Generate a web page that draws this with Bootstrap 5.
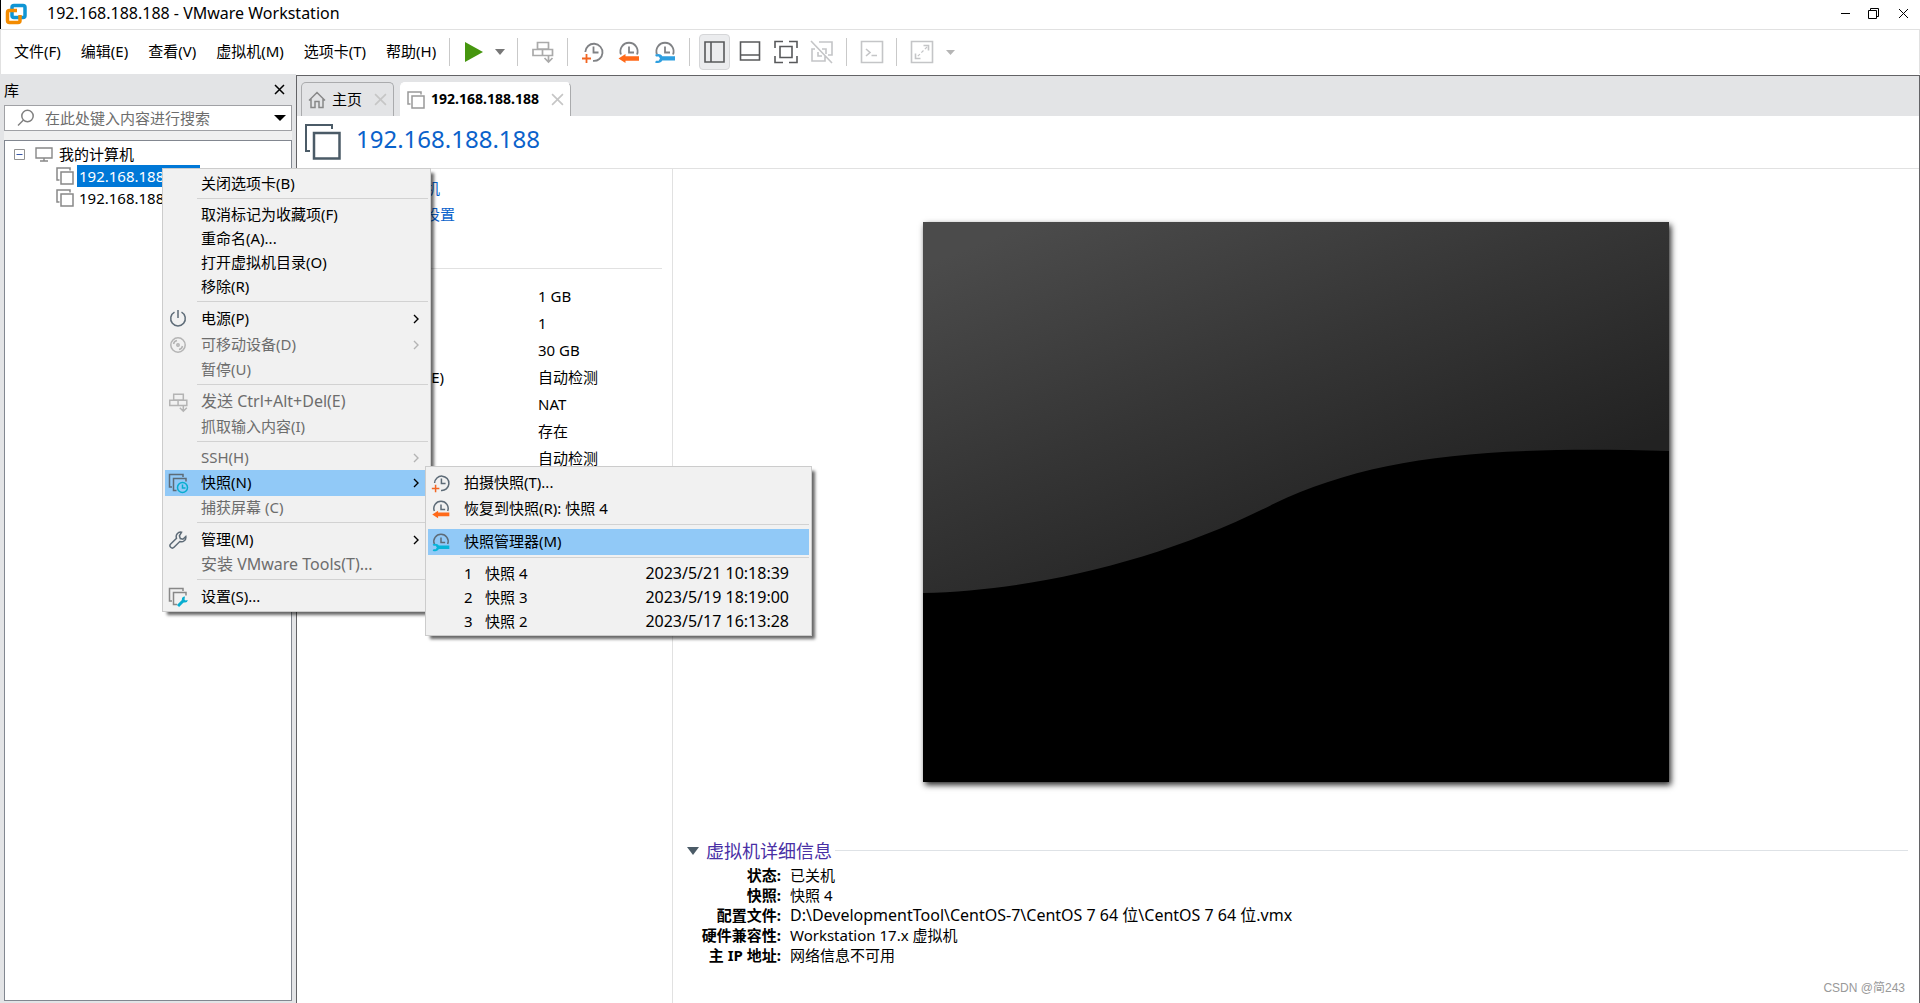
<!DOCTYPE html>
<html lang="zh-CN">
<head>
<meta charset="utf-8">
<meta name="viewport" content="width=device-width, initial-scale=1">
<title>192.168.188.188 - VMware Workstation</title>
<link rel="stylesheet" href="https://cdn.jsdelivr.net/npm/bootstrap@5.3.0/dist/css/bootstrap.min.css">
<style>
  :root { --chrome: #e3e4e6; --rule: #e1e1e1; --frame: #636366; --link: #0a62cb; --slate: #4b5b67; }
  body { font: 15px/20px "Noto Sans", "Noto Sans CJK SC", sans-serif; color: #000; background: #fff; }
  button { font: inherit; color: inherit; background: none; border: 0; padding: 0; text-align: left; white-space: nowrap; }
  svg { display: block; flex: none; }
  a { text-decoration: none; color: var(--link); }
  .app-window { min-height: 100vh; }
  .latin-lg { font-size: 16px; }

  .title-bar { height: 29px; border-left: 1px solid #000; padding: 0 11px 2px 4px; }
  .title-text { margin-left: 20px; font-weight: 400; }
  .win-restore { margin: 0 19px 0 17px; }
  .menu-bar { height: 45px; border: 1px solid var(--rule); border-bottom: 0; padding-left: 13px; }
  .menu-list { gap: 20px; margin-right: 13px; padding-bottom: 2px; }
  .divider { width: 1px; height: 28px; background: #c9c9c9; flex: none; }
  .tool-set { padding: 0 12px 0 13px; gap: 12px; }
  .power-set { padding-left: 15px; }
  .view-set { padding-left: 9px; color: #58595b; }
  .clock-set { color: #808285; }
  .tool-off { color: #c4c5c7; }
  .tool-keys { color: #aaa; }
  .tool-toggle { width: 31px; height: 36px; border: 1px solid #d5d6d8; border-radius: 4px; background: #ebecee; margin-right: -4px; }

  .library { width: 296px; background: var(--chrome); padding: 0 4px 2px; }
  .library-head { height: 31px; padding-right: 7px; }
  .search-box { height: 26px; border: 1px solid #a0a1a5; background: #fff; padding: 0 5px 0 12px; }
  .search-box input { min-width: 0; border: 0; padding: 0; margin-left: 10px; font: inherit; outline: 0; background: none; }
  .search-box input::placeholder { color: #6d6d6d; opacity: 1; }
  .pane-gap { height: 9px; background: #f0f0f0; }
  .tree-box { border: 1px solid #828790; background: #fff; padding: 2px 0; }
  .tree-row { height: 22px; gap: 3px; }
  .tree-root { padding-left: 9px; gap: 6px; }
  .tree-leaf { padding-left: 51px; padding-right: 10px; }
  .tree-name { height: 22px; line-height: 22px; padding: 0 2px; width: 123px; }
  .tree-name.chosen { background: #0078d7; color: #fff; }

  .workspace { border: 1px solid var(--frame); border-bottom: 0; min-width: 0; margin-top: 1px; }
  .tab-strip { height: 40px; background: var(--chrome); padding: 6px 0 0 4px; gap: 6px; }
  .vm-tab { height: 34px; border: 1px solid #aaabad; border-bottom: 0; border-radius: 5px 5px 0 0; padding: 0 6px; gap: 6px; }
  .vm-tab.current { background: #fff; border-left-color: #fff; border-top-color: #fff; font-size: 14px; font-weight: 700; }
  .tab-label { padding-bottom: 2px; }
  .tab-close { color: #c6c6c6; margin-left: 6px; }
  .vm-head { height: 53px; border-bottom: 1px solid var(--rule); padding-left: 8px; }
  .vm-name { font-size: 24px; line-height: 32px; font-weight: 400; color: var(--link); margin: 0 0 6px 15px; }

  .summary { width: 376px; border-right: 1px solid var(--rule); padding: 6px 10px 0 53px; flex: none; }
  .summary a { line-height: 26px; }
  .summary hr { margin: 41px 0 13px; border-color: var(--rule); opacity: 1; }
  .device-table { width: 100%; }
  .device-table th, .device-table td { height: 27px; padding: 0; font-weight: 400; }
  .device-table th { width: 188px; }

  .console { padding: 53px 11px 0; min-width: 0; }
  .guest-screen { width: 61%; aspect-ratio: 4 / 3; margin: 0 auto 55px; box-shadow: 2px 3px 6px rgba(0,0,0,.85); }
  .guest-screen svg { width: 100%; height: 100%; }
  .detail-head { height: 28px; padding-left: 3px; }
  .detail-title { font-size: 18px; line-height: 28px; font-weight: 400; color: #4930a5; margin: 0 3px 0 7px; }
  .detail-list { display: grid; grid-template-columns: 97px 1fr; column-gap: 9px; margin: 0; }
  .detail-list dt { text-align: right; white-space: nowrap; }
  .detail-list dd { margin: 0; }
  .watermark { right: 15px; bottom: 6px; font: 12px/18px "Liberation Sans", "Noto Sans CJK SC", sans-serif; color: #999; }

  .popup { background: #f1f1f1; border: 1px solid #ccc; padding: 3px 2px 1px; box-shadow: 4px 4px 3px -1px rgba(0,0,0,.6); }
  .context-menu { left: 162px; top: 168px; width: 269px; z-index: 5; }
  .snapshot-menu { left: 425px; top: 466px; width: 387px; z-index: 6; }
  .entry { height: 24px; padding: 0 8px 2px 0; width: 100%; }
  .entry.tall { height: 26px; }
  .entry:disabled { color: #6d6d6d; }
  .entry.hot { background: #91c9f7; }
  .entry svg { margin-top: 2px; }
  .entry-icon { width: 36px; padding-left: 3px; flex: none; color: #5d6b77; }
  .entry:disabled .entry-icon, .entry:disabled > svg { color: #b4b4b4; }
  .popup .entry-icon { --tint: #08b4d8; }
  .popup-rule { height: 1px; background: #d2d2d2; margin: 2px 0 4px 32px; }
  .snap-no { width: 21px; }
  .snap-time { margin-right: 12px; }
</style>
</head>
<body>
<svg width="0" height="0" class="position-absolute" aria-hidden="true">
  <defs>
    <symbol id="i-vm" viewBox="0 0 18 18"><path d="M3.500 13H1V1h13v2.500M5 5h12v12H5z" fill="none" stroke="currentColor" stroke-width="1.500"/></symbol>
    <symbol id="i-x" viewBox="0 0 12 12"><path d="M1 1l10 10M11 1L1 11" stroke="currentColor" fill="none" stroke-width="1.500"/></symbol>
    <symbol id="i-clock" viewBox="0 0 24 24"><path d="M4.300 12A8.600 8.600 0 1 1 12 20.900M12.500 6.500v6h5" fill="none" stroke="currentColor" stroke-width="1.800"/></symbol>
    <symbol id="i-halfclock" viewBox="0 0 24 24"><path d="M4 14.500A8.600 8.600 0 1 1 20 14.500M12 6.500v6h5" fill="none" stroke="currentColor" stroke-width="1.800"/></symbol>
    <symbol id="i-snap" viewBox="0 0 24 24"><use href="#i-clock"/><path d="M5.500 14v9M1 18.500h9" stroke="#f26522" stroke-width="1.800"/></symbol>
    <symbol id="i-revert" viewBox="0 0 24 24"><use href="#i-halfclock"/><path d="M1.500 18.500l7-4.500v2.300H22v4.400H8.500V23z" fill="#ff6a1a"/></symbol>
    <symbol id="i-manage" viewBox="0 0 24 24"><use href="#i-halfclock"/><path d="M2 14.800c3.200-1.500 6.300-.500 7.300 1.500H22v4.200H9.300c-1 2.300-4.100 3.200-7.300 1.900l1-1.600h2.700l1.300-2.300-1.300-2.100H3z" fill="var(--tint,#2e9fe0)"/></symbol>
    <symbol id="i-keys" viewBox="0 0 24 24"><path d="M6.500 2.500h11v6.500h-11zM2 9.500h9.500v6H2zM11.500 9.500h10v6h-10zM17.500 15.500v6.500M13.500 18l4 4 4-4" fill="none" stroke="currentColor" stroke-width="1.700"/></symbol>
    <symbol id="i-next" viewBox="0 0 8 12"><path d="M2 2l4 4-4 4" fill="none" stroke="currentColor" stroke-width="1.400"/></symbol>
  </defs>
</svg>

<div class="app-window d-flex flex-column position-relative">
  <header class="title-bar d-flex align-items-center">
    <svg width="22" height="22" viewBox="0 0 22 22" fill="none" stroke-width="3.500"><rect x="7" y="2.500" width="13" height="12" rx="2" stroke="#0f95d4"/><path d="M12 7.500H4.500a2 2 0 0 0-2 2v8a2 2 0 0 0 2 2H13a2 2 0 0 0 2-2V12" stroke="#f38b00"/></svg>
    <h1 class="title-text latin-lg mb-0 flex-grow-1">192.168.188.188 - VMware Workstation</h1>
    <button aria-label="最小化"><svg width="11" height="11"><path d="M1 5.500h9" stroke="#000"/></svg></button>
    <button class="win-restore" aria-label="还原"><svg width="11" height="11" fill="none" stroke="#000"><path d="M.5 2.500h8v8h-8zM2.500 2.500v-2h8v8h-2"/></svg></button>
    <button aria-label="关闭"><svg width="11" height="11"><path d="M1 1l9 9M10 1l-9 9" stroke="#000"/></svg></button>
  </header>

  <nav class="menu-bar d-flex align-items-center">
    <div class="menu-list d-flex">
      <button>文件(F)</button><button>编辑(E)</button><button>查看(V)</button><button>虚拟机(M)</button><button>选项卡(T)</button><button>帮助(H)</button>
    </div>
    <span class="divider"></span>
    <div class="tool-set power-set d-flex align-items-center">
      <button aria-label="开启"><svg width="18" height="20"><path d="M0 0l18 10L0 20z" fill="#46960f"/></svg></button>
      <button aria-label="电源选项"><svg width="10" height="6"><path d="M0 0h10L5 6z" fill="#777"/></svg></button>
    </div>
    <span class="divider"></span>
    <div class="tool-set tool-keys d-flex align-items-center">
      <button aria-label="发送 Ctrl+Alt+Del"><svg width="24" height="24"><use href="#i-keys"/></svg></button>
    </div>
    <span class="divider"></span>
    <div class="tool-set clock-set d-flex align-items-center">
      <button aria-label="拍摄快照"><svg width="24" height="24"><use href="#i-snap"/></svg></button>
      <button aria-label="恢复快照"><svg width="24" height="24"><use href="#i-revert"/></svg></button>
      <button aria-label="管理快照"><svg width="24" height="24"><use href="#i-manage"/></svg></button>
    </div>
    <span class="divider"></span>
    <div class="tool-set view-set d-flex align-items-center">
      <button class="tool-toggle d-flex align-items-center justify-content-center" aria-label="显示库"><svg width="21" height="22" fill="none" stroke="currentColor" stroke-width="1.600"><path d="M1 1h19v20H1zM7 1v20"/></svg></button>
      <button aria-label="缩略图栏"><svg width="24" height="24" fill="none" stroke="currentColor" stroke-width="1.600"><path d="M2.500 2h19v18h-19zM2.500 15h19"/></svg></button>
      <button aria-label="全屏"><svg width="24" height="24" fill="none" stroke="currentColor" stroke-width="1.600"><path d="M6 6.500h12v11H6zM1 8V1.500H9M15 1.500h8V8M23 16v6.500h-8M9 22.500H1V16"/></svg></button>
      <button class="tool-off" aria-label="Unity"><svg width="24" height="24" fill="none" stroke="currentColor" stroke-width="1.600"><path d="M9 2h13v13h-4M5 9H2v12h13v-5M12 9h4v5M8 12v4h4M1 1l21 22"/></svg></button>
    </div>
    <span class="divider"></span>
    <div class="tool-set tool-off d-flex align-items-center">
      <button aria-label="控制台"><svg width="24" height="24" fill="none" stroke="currentColor" stroke-width="1.600"><path d="M1.500 1.500h21v21h-21zM6 9l4 3.500L6 16M11.500 15.500H17"/></svg></button>
    </div>
    <span class="divider"></span>
    <div class="tool-set tool-off d-flex align-items-center">
      <button aria-label="拉伸"><svg width="24" height="24" fill="none" stroke="currentColor" stroke-width="1.600"><path d="M1.500 1.500h21v21h-21zM13.500 5.500h5v5M5.500 13.500v5h5"/><path d="M17 7L7 17" stroke-dasharray="3 2" stroke-width="1.200"/></svg></button>
      <button aria-label="拉伸选项"><svg width="9" height="5"><path d="M0 0h9L4.500 5z" fill="#b5b5b5"/></svg></button>
    </div>
  </nav>

  <div class="d-flex flex-grow-1">
    <aside class="library d-flex flex-column flex-shrink-0">
      <div class="library-head d-flex align-items-center justify-content-between"><span>库</span><button aria-label="关闭库"><svg width="11" height="11"><path d="M1 1l9 9M10 1l-9 9" stroke="#000" stroke-width="1.500"/></svg></button></div>
      <div class="search-box d-flex align-items-center">
        <svg width="18" height="18" fill="none" stroke="#808080" stroke-width="1.500"><circle cx="10.500" cy="7" r="5.700"/><path d="M6.500 11L1 16.500"/></svg>
        <input class="flex-grow-1" id="lib-search" type="text" aria-label="搜索" placeholder="在此处键入内容进行搜索">
        <svg width="12" height="6"><path d="M0 0h12L6 6z"/></svg>
      </div>
      <div class="pane-gap"></div>
      <div class="tree-box flex-grow-1">
        <div class="tree-row tree-root d-flex align-items-center">
          <svg width="11" height="11" fill="none"><path d="M.5.5h10v10H.5z" stroke="#919191"/><path d="M2.500 5.500h6" stroke="#3858a8"/></svg>
          <svg class="ms-1" width="18" height="15" fill="none" stroke="#888" stroke-width="1.400"><path d="M1 1h16v10H1zM9 11v3M5 14h8"/></svg>
          <span>我的计算机</span>
        </div>
        <div class="tree-row tree-leaf d-flex align-items-center">
          <svg width="18" height="18" color="#888"><use href="#i-vm"/></svg><span class="tree-name chosen">192.168.188.188</span>
          <svg class="ms-auto" width="14" height="14"><path d="M7 0l2 5h5l-4 3 1.500 5L7 10l-4.500 3L4 8 0 5h5z" fill="#999"/></svg>
        </div>
        <div class="tree-row tree-leaf d-flex align-items-center">
          <svg width="18" height="18" color="#888"><use href="#i-vm"/></svg><span class="tree-name">192.168.188.189</span>
        </div>
      </div>
    </aside>

    <main class="workspace flex-grow-1 d-flex flex-column">
      <div class="tab-strip d-flex">
        <div class="vm-tab d-flex align-items-center">
          <svg width="18" height="18" fill="none" stroke="#888" stroke-width="1.500"><path d="M1 9.500l8-8 8 8M3 8v8.500h4v-6h4v6h4V8"/></svg>
          <button class="tab-label">主页</button>
          <button class="tab-close" aria-label="关闭主页"><svg width="13" height="13"><use href="#i-x"/></svg></button>
        </div>
        <div class="vm-tab current d-flex align-items-center">
          <svg width="18" height="18" color="#999"><use href="#i-vm"/></svg>
          <button class="tab-label">192.168.188.188</button>
          <button class="tab-close" aria-label="关闭标签"><svg width="13" height="13"><use href="#i-x"/></svg></button>
        </div>
      </div>
      <div class="vm-head d-flex align-items-center">
        <svg width="36" height="36" viewBox="0 0 36 36" fill="none" stroke="#4b5b67" stroke-width="2"><path d="M5 27H1V1h26v4"/><path d="M9 9h25.500v25.500H9z" stroke-width="2.500"/></svg>
        <h2 class="vm-name">192.168.188.188</h2>
      </div>
      <div class="d-flex flex-grow-1">
        <section class="summary">
          <div><a href="#">开启此虚拟机</a></div>
          <div><a href="#">编辑虚拟机设置</a></div>
          <hr>
          <table class="device-table">
            <tr><th></th><td>1 GB</td></tr>
            <tr><th></th><td>1</td></tr>
            <tr><th></th><td>30 GB</td></tr>
            <tr><th>CD/DVD (IDE)</th><td>自动检测</td></tr>
            <tr><th></th><td>NAT</td></tr>
            <tr><th></th><td>存在</td></tr>
            <tr><th></th><td>自动检测</td></tr>
          </table>
        </section>
        <section class="console flex-grow-1">
          <div class="guest-screen">
            <svg viewBox="0 0 746 560" preserveAspectRatio="none">
              <defs><linearGradient id="gl" gradientUnits="userSpaceOnUse" x1="60" y1="20" x2="220" y2="420"><stop offset="0" stop-color="#4b4b4b"/><stop offset=".5" stop-color="#363636"/><stop offset="1" stop-color="#222"/></linearGradient></defs>
              <path d="M0 0h746v560H0z"/>
              <path d="M0 0H746V229C560 224 450 234 350 282C240 338 110 369 0 371z" fill="url(#gl)"/>
            </svg>
          </div>
          <div class="detail-head d-flex align-items-center">
            <svg width="12" height="8"><path d="M0 0h12L6 8z" fill="#4b5b67"/></svg>
            <h3 class="detail-title">虚拟机详细信息</h3>
            <span class="flex-grow-1 border-top"></span>
          </div>
          <dl class="detail-list">
            <dt>状态:</dt><dd>已关机</dd>
            <dt>快照:</dt><dd>快照 4</dd>
            <dt>配置文件:</dt><dd class="latin-lg">D:\DevelopmentTool\CentOS-7\CentOS 7 64 位\CentOS 7 64 位.vmx</dd>
            <dt>硬件兼容性:</dt><dd>Workstation 17.x 虚拟机</dd>
            <dt>主 IP 地址:</dt><dd>网络信息不可用</dd>
          </dl>
        </section>
      </div>
    </main>
  </div>

  <div class="popup context-menu position-absolute">
    <button class="entry d-flex align-items-center"><span class="entry-icon"></span>关闭选项卡(B)</button>
    <div class="popup-rule"></div>
    <button class="entry d-flex align-items-center"><span class="entry-icon"></span>取消标记为收藏项(F)</button>
    <button class="entry d-flex align-items-center"><span class="entry-icon"></span>重命名(A)...</button>
    <button class="entry d-flex align-items-center"><span class="entry-icon"></span>打开虚拟机目录(O)</button>
    <button class="entry d-flex align-items-center"><span class="entry-icon"></span>移除(R)</button>
    <div class="popup-rule"></div>
    <button class="entry tall d-flex align-items-center"><span class="entry-icon"><svg width="20" height="20" fill="none" stroke="currentColor" stroke-width="1.500"><path d="M6.500 3.200a7.300 7.300 0 1 0 7 0M10 1v8"/></svg></span>电源(P)<svg class="ms-auto" width="8" height="12"><use href="#i-next"/></svg></button>
    <button class="entry tall d-flex align-items-center" disabled><span class="entry-icon"><svg width="20" height="20" fill="none" stroke="currentColor" stroke-width="1.500"><circle cx="10" cy="10" r="7.200"/><circle cx="10" cy="10" r="1.200"/><path d="M5.500 9a4.500 4.500 0 0 1 3.500-3.500M14.500 11a4.500 4.500 0 0 1-3.500 3.500"/></svg></span>可移动设备(D)<svg class="ms-auto" width="8" height="12"><use href="#i-next"/></svg></button>
    <button class="entry d-flex align-items-center" disabled><span class="entry-icon"></span>暂停(U)</button>
    <div class="popup-rule"></div>
    <button class="entry tall d-flex align-items-center" disabled><span class="entry-icon"><svg width="21" height="21"><use href="#i-keys"/></svg></span><span class="latin-lg">发送 Ctrl+Alt+Del(E)</span></button>
    <button class="entry d-flex align-items-center" disabled><span class="entry-icon"></span>抓取输入内容(I)</button>
    <div class="popup-rule"></div>
    <button class="entry d-flex align-items-center" disabled><span class="entry-icon"></span>SSH(H)<svg class="ms-auto" width="8" height="12"><use href="#i-next"/></svg></button>
    <button class="entry tall hot d-flex align-items-center"><span class="entry-icon"><svg width="21" height="21" fill="none" stroke="currentColor" stroke-width="1.500"><path d="M4 14H1.500V1.500H15V4M8.500 17.500H5.500V5.500H18v3"/><g stroke="#08aed0"><circle cx="14.500" cy="14.500" r="5"/><path d="M14.500 11.500v3.500h3"/></g></svg></span>快照(N)<svg class="ms-auto" width="8" height="12"><use href="#i-next"/></svg></button>
    <button class="entry d-flex align-items-center" disabled><span class="entry-icon"></span>捕获屏幕 (C)</button>
    <div class="popup-rule"></div>
    <button class="entry tall d-flex align-items-center"><span class="entry-icon"><svg width="20" height="20" fill="none" stroke="currentColor" stroke-width="1.500"><path d="M13.500 2.200a4.500 4.500 0 0 0-5 6L2.700 14a2.300 2.300 0 0 0 3.300 3.300l5.800-5.800a4.500 4.500 0 0 0 6-5l-2.900 2.700-2.600-.600-.900-2.800z"/></svg></span>管理(M)<svg class="ms-auto" width="8" height="12"><use href="#i-next"/></svg></button>
    <button class="entry d-flex align-items-center" disabled><span class="entry-icon"></span><span class="latin-lg">安装 VMware Tools(T)...</span></button>
    <div class="popup-rule"></div>
    <button class="entry tall d-flex align-items-center"><span class="entry-icon"><svg width="21" height="21" fill="none" stroke="#888" stroke-width="1.500"><path d="M4 14H1.500V1.500H15V4M9 17.500H5.500V5.500H18v3"/><path d="M10 19l5-5" stroke="#08aed0" stroke-width="3"/><path d="M17 9.500a3 3 0 1 0 2.800 3.500l-2.300.500-1-1z" fill="#08aed0" stroke="none"/></svg></span>设置(S)...</button>
  </div>

  <div class="popup snapshot-menu position-absolute">
    <button class="entry tall d-flex align-items-center"><span class="entry-icon"><svg width="20" height="20"><use href="#i-snap"/></svg></span>拍摄快照(T)...</button>
    <button class="entry tall d-flex align-items-center"><span class="entry-icon"><svg width="20" height="20"><use href="#i-revert"/></svg></span>恢复到快照(R): 快照 4</button>
    <div class="popup-rule"></div>
    <button class="entry tall hot d-flex align-items-center"><span class="entry-icon"><svg width="20" height="20"><use href="#i-manage"/></svg></span>快照管理器(M)</button>
    <div class="popup-rule"></div>
    <button class="entry d-flex align-items-center"><span class="entry-icon"></span><span class="snap-no">1</span>快照 4<span class="snap-time latin-lg ms-auto">2023/5/21 10:18:39</span></button>
    <button class="entry d-flex align-items-center"><span class="entry-icon"></span><span class="snap-no">2</span>快照 3<span class="snap-time latin-lg ms-auto">2023/5/19 18:19:00</span></button>
    <button class="entry d-flex align-items-center"><span class="entry-icon"></span><span class="snap-no">3</span>快照 2<span class="snap-time latin-lg ms-auto">2023/5/17 16:13:28</span></button>
  </div>

  <div class="watermark position-absolute">CSDN @简243</div>
</div>
<script src="https://cdn.jsdelivr.net/npm/bootstrap@5.3.0/dist/js/bootstrap.bundle.min.js"></script>
</body>
</html>
